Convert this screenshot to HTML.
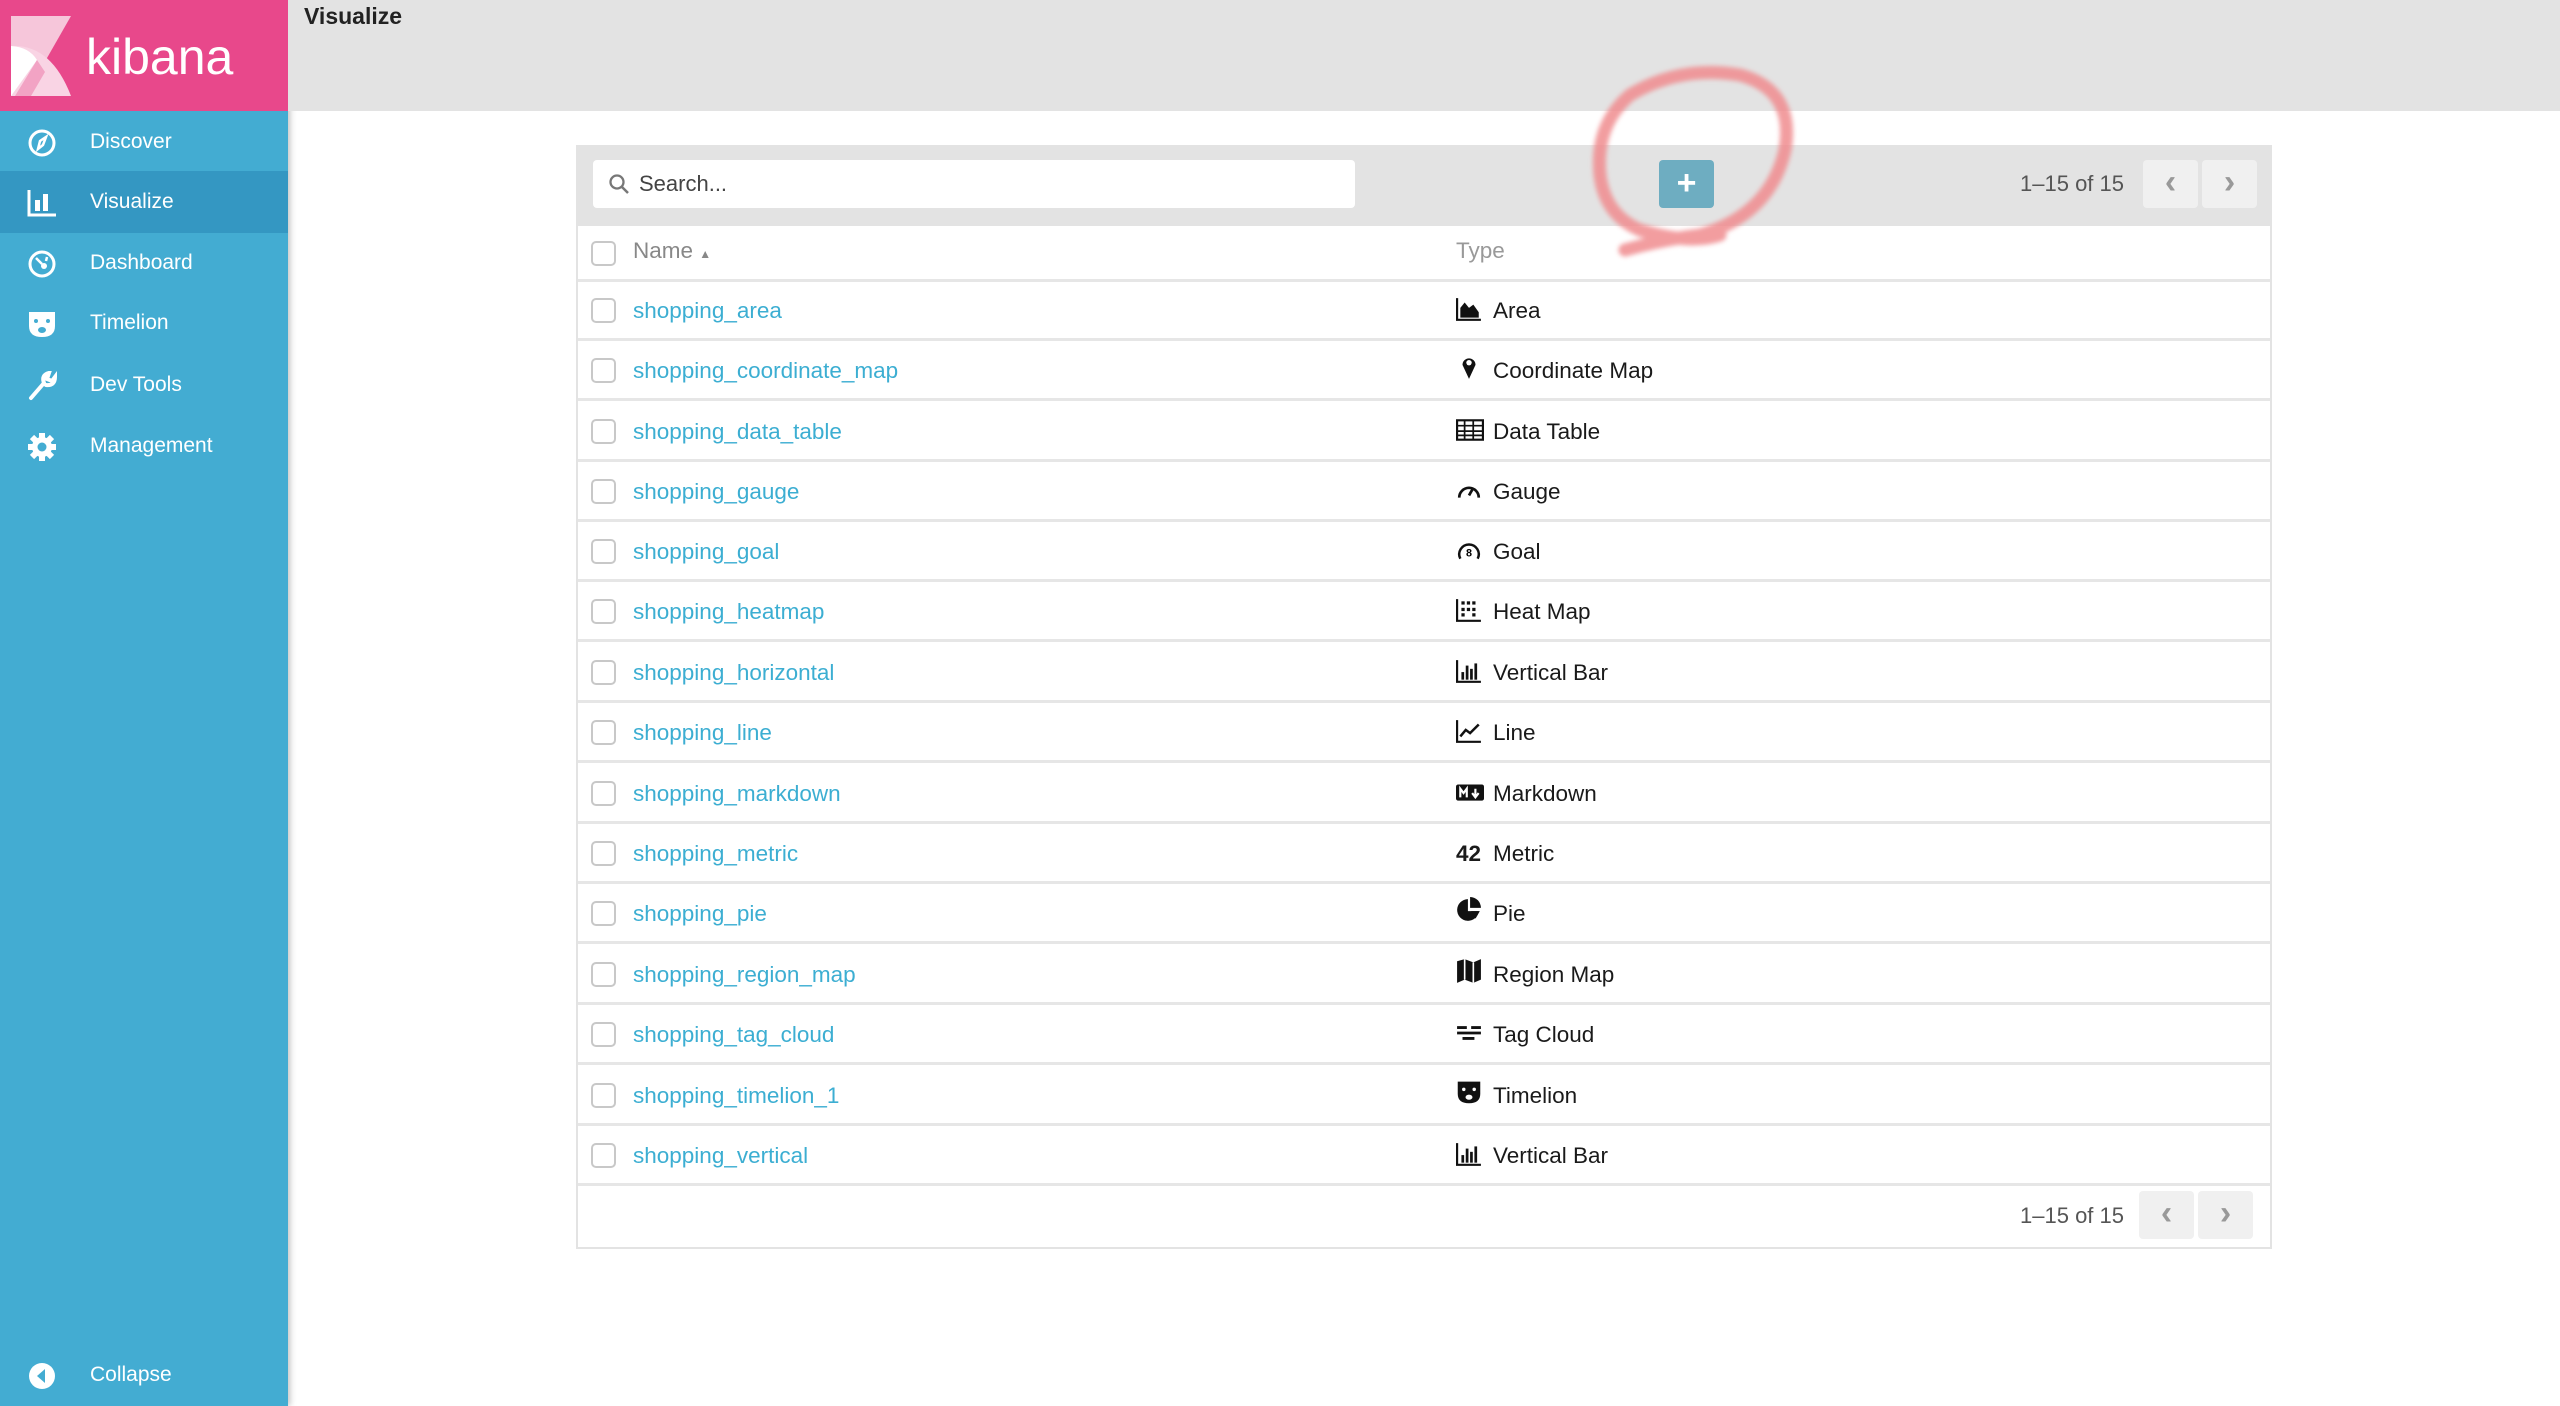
<!DOCTYPE html>
<html><head><meta charset="utf-8"><style>
*{margin:0;padding:0;box-sizing:border-box}
body{width:2560px;height:1406px;position:relative;overflow:hidden;background:#fff;font-family:"Liberation Sans","DejaVu Sans",sans-serif;}
.side{position:absolute;left:0;top:0;width:288px;height:1406px;background:#43acd2;box-shadow:2px 0 6px rgba(0,0,0,.25)}
.logo{position:absolute;left:0;top:0;width:288px;height:111px;background:#e8488b}
.logo span{position:absolute;left:86px;top:28px;font-size:50px;color:#fff}
.nav{position:absolute;left:0;width:288px;height:62px;color:#fff;font-size:21px;line-height:62px}
.nav span{position:absolute;left:90px}
.nav svg{position:absolute;left:27px;top:17px}
.top{position:absolute;left:288px;top:0;right:0;height:111px;background:#e3e3e3}
.top b{position:absolute;left:16px;top:3px;font-size:23px;color:#222}
.panel{position:absolute;left:576px;top:145px;width:1696px;height:1104px;border:2px solid #e3e3e3;}
.tb{position:absolute;left:0;top:0;right:0;height:79px;background:#e3e3e3}
.search{position:absolute;left:15px;top:13px;width:762px;height:48px;background:#fff;border-radius:4px;font-size:22px;color:#444;line-height:48px;padding-left:46px}
.plus{position:absolute;left:1081px;top:13px;width:55px;height:48px;background:#6eadc1;border-radius:4px;color:#fff;font-size:34px;font-weight:bold;text-align:center;line-height:46px}
.pg{position:absolute;font-size:22px;color:#555}
.pb{position:absolute;width:55px;height:48px;background:#f0f0f0;border-radius:4px;color:#999;font-size:34px;font-weight:bold;text-align:center;line-height:44px}
.row{position:absolute;left:0;right:0;height:60px;border-bottom:3px solid #e6e6e6}
.cb{position:absolute;left:13px;top:50%;margin-top:-12px;width:25px;height:25px;border:2px solid #c8c8c8;border-radius:5px;background:#fff}
.nm{position:absolute;left:55px;top:0;line-height:60px;font-size:22.5px;color:#3caed2}
.ty{position:absolute;left:915px;top:0;line-height:60px;font-size:22.5px;color:#1a1a1a}
.ic{position:absolute;left:878px;top:16px}
</style></head><body>
<div class="side">
 <div class="logo">
  <svg width="64" height="80" viewBox="0 0 64 80" style="position:absolute;left:11px;top:16px">
   <polygon points="0,0 60,0 20,70 0,70" fill="#f6c6da"/>
   <path d="M0,30 Q40,28 60,80 L0,80Z" fill="#f9d4e4"/>
   <path d="M0,30 Q18,31 26,44 L0,80Z" fill="#fff"/>
   <path d="M26,44 L4,80 L20,80 L34,56Z" fill="#f2a3c4"/>
  </svg>
  <span>kibana</span>
 </div>
 <div class="nav" style="top:111px"><svg width="30" height="30" viewBox="0 0 30 30"><circle cx="15" cy="15" r="12" fill="none" stroke="#fff" stroke-width="3"/><path d="M19 9 L16 17 L11 21 L13 13Z" fill="none" stroke="#fff" stroke-width="2.5"/></svg><span>Discover</span></div>
 <div class="nav" style="top:171px;background:#3497c2"><svg width="30" height="30" viewBox="0 0 30 30"><path d="M2 2V27H29" fill="none" stroke="#fff" stroke-width="3"/><rect x="8" y="12" width="5" height="11" fill="#fff"/><rect x="16" y="6" width="5" height="17" fill="#fff"/></svg><span>Visualize</span></div>
 <div class="nav" style="top:232px"><svg width="30" height="30" viewBox="0 0 30 30"><circle cx="15" cy="15" r="12" fill="none" stroke="#fff" stroke-width="3"/><circle cx="17" cy="17" r="3" fill="#fff"/><path d="M9 9 L15 15 M20 8 L19 12" stroke="#fff" stroke-width="2.5"/></svg><span>Dashboard</span></div>
 <div class="nav" style="top:292px"><svg width="30" height="30" viewBox="0 0 30 30"><path d="M2 3 H28 V17 Q28 28 15 28 Q2 28 2 17Z" fill="#fff"/><circle cx="9" cy="12" r="2" fill="#43acd2"/><circle cx="21" cy="12" r="2" fill="#43acd2"/><ellipse cx="15" cy="21" rx="4" ry="3" fill="#43acd2"/></svg><span>Timelion</span></div>
 <div class="nav" style="top:354px"><svg width="30" height="30" viewBox="0 0 30 30"><path d="M4 27 L17 12 M17 12 Q14 4 22 2 L20 8 L25 10 L28 6 Q28 15 19 14" fill="none" stroke="#fff" stroke-width="4" stroke-linecap="round"/></svg><span>Dev Tools</span></div>
 <div class="nav" style="top:415px"><svg width="30" height="30" viewBox="0 0 30 30"><circle cx="15" cy="15" r="10" fill="#fff"/><g stroke="#fff" stroke-width="6"><path d="M15 1V29M1 15H29M5 5L25 25M25 5L5 25"/></g><circle cx="15" cy="15" r="4.5" fill="#43acd2"/></svg><span>Management</span></div>
 <div class="nav" style="top:1344px"><svg width="30" height="30" viewBox="0 0 30 30"><circle cx="15" cy="15" r="13" fill="#fff"/><path d="M18 8 L10 15 L18 22Z" fill="#43acd2"/></svg><span>Collapse</span></div>
</div>
<div class="top"><b>Visualize</b></div>
<div class="panel">
 <div class="tb">
  <div class="search"><svg width="22" height="22" viewBox="0 0 22 22" style="position:absolute;left:15px;top:13px"><circle cx="9" cy="9" r="6.5" fill="none" stroke="#777" stroke-width="2.3"/><path d="M14 14 L20 20" stroke="#777" stroke-width="2.5"/></svg>Search...</div>
  <div class="plus">+</div>
  <div class="pg" style="right:146px;top:24px">1–15 of 15</div>
  <div class="pb" style="left:1565px;top:13px">‹</div>
  <div class="pb" style="left:1624px;top:13px">›</div>
 </div>
 <div class="row" style="top:79px;height:56px"><div class="cb"></div><div class="nm" style="color:#888;line-height:50px">Name <span style="font-size:12px">▲</span></div><div class="ty" style="color:#999;line-height:50px;left:878px">Type</div></div>
 <div class="row" style="top:134px"><div class="cb"></div><div class="nm">shopping_area</div><svg class="ic" width="26" height="24" viewBox="0 0 24 22"><path d="M1 1V21H23" fill="none" stroke="#111" stroke-width="2"/><path d="M4 19V10L8 5L12 10L16 7L21 14V19Z" fill="#111"/></svg><div class="ty">Area</div></div>
 <div class="row" style="top:194px"><div class="cb"></div><div class="nm">shopping_coordinate_map</div><svg class="ic" width="26" height="28" viewBox="0 0 24 24" style="top:12px"><path d="M12 23 L6 10 A6 6 0 1 1 18 10Z" fill="#111"/><circle cx="12" cy="8" r="2.5" fill="#fff"/></svg><div class="ty">Coordinate Map</div></div>
 <div class="row" style="top:255px"><div class="cb"></div><div class="nm">shopping_data_table</div><svg class="ic" width="28" height="24" viewBox="0 0 26 22"><rect x="1" y="2" width="24" height="18" fill="none" stroke="#111" stroke-width="2"/><path d="M1 7H25M1 12H25M1 16H25M8 2V20M16 2V20" stroke="#111" stroke-width="1.6"/></svg><div class="ty">Data Table</div></div>
 <div class="row" style="top:315px"><div class="cb"></div><div class="nm">shopping_gauge</div><svg class="ic" width="26" height="24" viewBox="0 0 24 22"><path d="M3 18 A9 9 0 1 1 21 18" fill="none" stroke="#111" stroke-width="2.5"/><path d="M12 16L16 9" stroke="#111" stroke-width="2.5"/></svg><div class="ty">Gauge</div></div>
 <div class="row" style="top:375px"><div class="cb"></div><div class="nm">shopping_goal</div><svg class="ic" width="26" height="24" viewBox="0 0 24 22"><path d="M4 19 A9 9 0 1 1 20 19" fill="none" stroke="#111" stroke-width="2.3"/><text x="12" y="17" font-size="10" font-weight="bold" text-anchor="middle" font-family="Liberation Sans">8</text></svg><div class="ty">Goal</div></div>
 <div class="row" style="top:435px"><div class="cb"></div><div class="nm">shopping_heatmap</div><svg class="ic" width="26" height="24" viewBox="0 0 24 22"><path d="M1 1V21H23" fill="none" stroke="#111" stroke-width="2"/><g fill="#111"><rect x="5" y="3" width="3" height="3"/><rect x="10" y="3" width="3" height="3"/><rect x="15" y="3" width="3" height="3"/><rect x="5" y="9" width="3" height="3"/><rect x="10" y="9" width="3" height="3"/><rect x="15" y="9" width="3" height="3"/><rect x="5" y="14" width="3" height="3"/><rect x="15" y="14" width="3" height="3"/></g></svg><div class="ty">Heat Map</div></div>
 <div class="row" style="top:496px"><div class="cb"></div><div class="nm">shopping_horizontal</div><svg class="ic" width="26" height="24" viewBox="0 0 24 22"><path d="M1 1V21H23" fill="none" stroke="#111" stroke-width="2"/><g fill="#111"><rect x="5" y="12" width="2.5" height="7"/><rect x="9" y="6" width="2.5" height="13"/><rect x="13" y="9" width="2.5" height="10"/><rect x="17" y="4" width="2.5" height="15"/></g></svg><div class="ty">Vertical Bar</div></div>
 <div class="row" style="top:556px"><div class="cb"></div><div class="nm">shopping_line</div><svg class="ic" width="26" height="24" viewBox="0 0 24 22"><path d="M1 1V21H23" fill="none" stroke="#111" stroke-width="2"/><path d="M4 16L9 10L13 13L21 5" fill="none" stroke="#111" stroke-width="2.3"/></svg><div class="ty">Line</div></div>
 <div class="row" style="top:617px"><div class="cb"></div><div class="nm">shopping_markdown</div><svg class="ic" width="28" height="24" viewBox="0 0 26 22"><rect x="0" y="4" width="26" height="15" rx="2" fill="#111"/><path d="M4 16V8L7 12L10 8V16M18 8V15M15 12L18 16L21 12" fill="none" stroke="#fff" stroke-width="2"/></svg><div class="ty">Markdown</div></div>
 <div class="row" style="top:677px"><div class="cb"></div><div class="nm">shopping_metric</div><div class="ty" style="left:878px;font-weight:bold">42</div><div class="ty">Metric</div></div>
 <div class="row" style="top:737px"><div class="cb"></div><div class="nm">shopping_pie</div><svg class="ic" width="26" height="26" viewBox="0 0 24 24" style="top:13px"><path d="M11 2 A10 10 0 1 0 21 13 L11 13Z" fill="#111"/><path d="M13 0 A10 10 0 0 1 23 10 L13 10Z" fill="#111"/><path d="M14 13 L22 13 L18 20Z" fill="#111"/></svg><div class="ty">Pie</div></div>
 <div class="row" style="top:798px"><div class="cb"></div><div class="nm">shopping_region_map</div><svg class="ic" width="26" height="26" viewBox="0 0 24 24" style="top:13px"><path d="M1 3L8 1L16 4L23 1V20L16 23L8 20L1 23Z" fill="#111"/><path d="M8 1V20M16 4V23" stroke="#fff" stroke-width="1.5"/></svg><div class="ty">Region Map</div></div>
 <div class="row" style="top:858px"><div class="cb"></div><div class="nm">shopping_tag_cloud</div><svg class="ic" width="26" height="24" viewBox="0 0 24 22"><path d="M1 6H10M14 6H23M1 11H23M6 16H17" stroke="#111" stroke-width="2.6"/></svg><div class="ty">Tag Cloud</div></div>
 <div class="row" style="top:919px"><div class="cb"></div><div class="nm">shopping_timelion_1</div><svg class="ic" width="26" height="26" viewBox="0 0 30 30" style="top:13px"><path d="M2 3 H28 V17 Q28 28 15 28 Q2 28 2 17Z" fill="#111"/><circle cx="9" cy="12" r="2" fill="#fff"/><circle cx="21" cy="12" r="2" fill="#fff"/><ellipse cx="15" cy="21" rx="4" ry="3" fill="#fff"/></svg><div class="ty">Timelion</div></div>
 <div class="row" style="top:979px"><div class="cb"></div><div class="nm">shopping_vertical</div><svg class="ic" width="26" height="24" viewBox="0 0 24 22"><path d="M1 1V21H23" fill="none" stroke="#111" stroke-width="2"/><g fill="#111"><rect x="5" y="12" width="2.5" height="7"/><rect x="9" y="6" width="2.5" height="13"/><rect x="13" y="9" width="2.5" height="10"/><rect x="17" y="4" width="2.5" height="15"/></g></svg><div class="ty">Vertical Bar</div></div>
 <div class="pg" style="right:146px;top:1056px">1–15 of 15</div>
 <div class="pb" style="left:1561px;top:1044px">‹</div>
 <div class="pb" style="left:1620px;top:1044px">›</div>
</div>
<svg width="2560" height="1406" style="position:absolute;left:0;top:0;pointer-events:none">
 <defs><filter id="bl"><feGaussianBlur stdDeviation="2.5"/></filter></defs>
 <path d="M1625 250 Q1660 240 1700 235 Q1770 215 1785 150 Q1795 90 1740 75 Q1680 65 1630 95 Q1595 125 1600 175 Q1605 215 1640 230 Q1690 245 1720 235" fill="none" stroke="#f08c8f" stroke-width="13" stroke-linecap="round" opacity=".85" filter="url(#bl)"/>
</svg>
</body></html>
